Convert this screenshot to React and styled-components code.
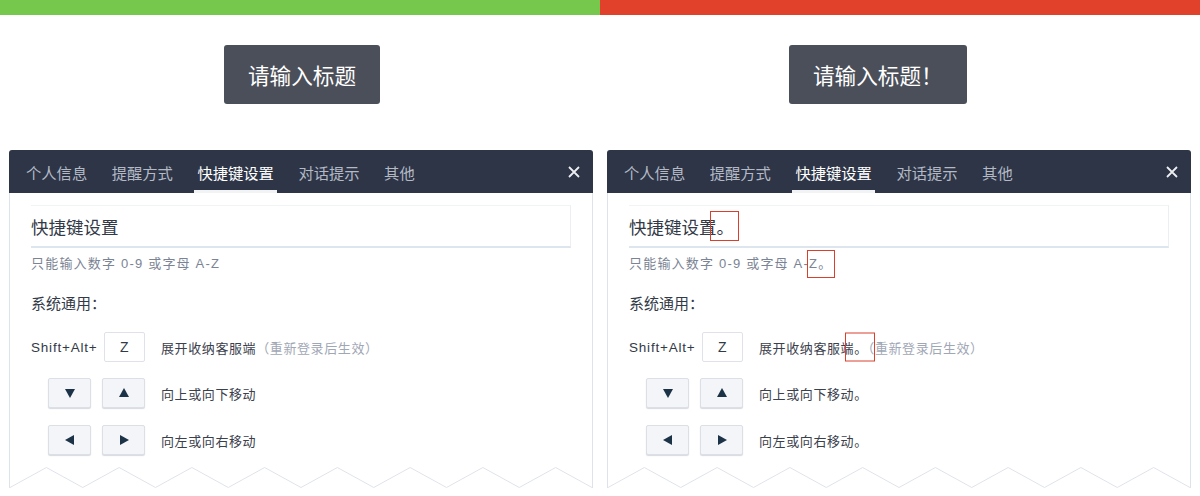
import React from 'react';
import styled, { createGlobalStyle } from 'styled-components';

const GlobalStyle = createGlobalStyle`
  body {
    margin: 0;
    background: #fff;
    font-family: "Liberation Sans", "Noto Sans CJK SC", sans-serif;
  }
`;

const Page = styled.div`
  display: grid;
  grid-template-columns: 600px 600px;
  width: 1200px;
  height: 496px;
  overflow: hidden;
`;

const Half = styled.section`
  display: flex;
  flex-direction: column;
`;

const TopBar = styled.div`
  height: 15px;
  background: ${p => p.$color};
`;

const TitleButton = styled.button`
  align-self: flex-start;
  margin: 30px 0 0 ${p => p.$offset}px;
  height: 59px;
  padding: 0 24px;
  border: none;
  border-radius: 3px;
  background: #4b4f5a;
  color: #fff;
  font-family: "Noto Sans CJK SC", sans-serif;
  font-size: 21.6px;
  display: flex;
  align-items: center;
`;

const Panel = styled.div`
  margin: 46px 0 0 ${p => p.$offset}px;
  width: 584px;
`;

const Header = styled.div`
  height: 43px;
  box-sizing: border-box;
  display: flex;
  align-items: stretch;
  padding: 0 13px 0 14px;
  background: #2d3547;
  border-radius: 3px 3px 0 0;
`;

const TabList = styled.div`
  display: flex;
  gap: 18.5px;
`;

const Tab = styled.div`
  display: flex;
  align-items: center;
  padding: 0 3px;
  border-top: 3px solid transparent;
  border-bottom: 3px solid ${p => (p.$active ? '#f2f3f5' : 'transparent')};
  font-family: "Noto Sans CJK SC", sans-serif;
  font-size: 15.3px;
  color: ${p => (p.$active ? '#ffffff' : '#b3b9c5')};
`;

const Close = styled.div`
  margin-left: auto;
  align-self: center;
  display: flex;
`;

const Body = styled.div`
  border: 1px solid #dde3eb;
  border-top: none;
  border-bottom: none;
  padding-top: 12px;
`;

const Content = styled.div`
  padding: 0 21px;
`;

const TitleBox = styled.div`
  height: 40px;
  display: flex;
  align-items: center;
  border-top: 1px solid #f2f3f5;
  border-right: 1px solid #eceef2;
  border-bottom: 2px solid #dde5ef;
  font-family: "Noto Sans CJK SC", sans-serif;
  font-size: 17.5px;
  color: #323a48;
`;

const Hint = styled.div`
  margin-top: 6px;
  line-height: 20px;
  font-size: 13px;
  letter-spacing: 1.2px;
  color: #7b8494;
`;

const Section = styled.div`
  margin-top: 18px;
  line-height: 22px;
  font-family: "Noto Sans CJK SC", sans-serif;
  font-size: 15px;
  color: #333a47;
`;

const Row = styled.div`
  display: flex;
  align-items: center;
  height: 30px;
  margin-top: ${p => p.$gap}px;
`;

const Cluster = styled.div`
  width: 114px;
  display: flex;
  justify-content: flex-end;
  align-items: center;
  gap: ${p => p.$gap}px;
`;

const KeyLabel = styled.span`
  font-size: 13.5px;
  letter-spacing: 0.8px;
  color: #333a47;
`;

const KeyInput = styled.div`
  width: 42px;
  height: 30px;
  box-sizing: border-box;
  display: flex;
  align-items: center;
  justify-content: center;
  border: 1px solid #dfe2e8;
  border-radius: 2px;
  background: #fff;
  font-size: 14px;
  color: #333a47;
`;

const ArrowKey = styled.div`
  width: 43px;
  height: 30px;
  box-sizing: border-box;
  display: flex;
  align-items: center;
  justify-content: center;
  border: 1px solid #dcdfe5;
  border-radius: 2px;
  background: #f3f5f8;
  box-shadow: 0 1px 1px rgba(30, 50, 80, 0.18);
`;

const Desc = styled.div`
  margin-left: 16px;
  font-family: "Noto Sans CJK SC", sans-serif;
  font-size: 13px;
  letter-spacing: 0.6px;
  color: #3a404c;
`;

const Note = styled.span`
  color: #9fa7b5;
`;

const Mark = styled.span`
  position: relative;
  &::after {
    content: '';
    position: absolute;
    left: ${p => p.$dx}px;
    top: 50%;
    transform: translateY(-50%);
    width: ${p => p.$w}px;
    height: ${p => p.$h}px;
    box-sizing: border-box;
    border: 1.5px solid #d8402c;
  }
`;

const Zigzag = styled.svg`
  display: block;
  margin-top: 12px;
  width: 100%;
  height: 21px;
`;

const tabs = ['个人信息', '提醒方式', '快捷键设置', '对话提示', '其他'];

const arrows = {
  down: '1,2 11,2 6,11',
  up: '1,10 11,10 6,1',
  left: '10,1 10,11 1,6',
  right: '2,1 2,11 11,6',
};

const Arrow = ({ dir }) => (
  <ArrowKey>
    <svg width="12" height="12" viewBox="0 0 12 12">
      <polygon points={arrows[dir]} fill="#1c3246" />
    </svg>
  </ArrowKey>
);

const zigPoints = (() => {
  const w = 582;
  const n = 8;
  const step = w / n;
  const pts = [];
  for (let i = 0; i <= n; i++) {
    pts.push(`${i * step},20.5`);
    if (i < n) pts.push(`${i * step + step / 2},0.5`);
  }
  return pts.join(' ');
})();

const Dot = ({ marked, dx, w, h, children }) =>
  marked ? (
    <Mark $dx={dx} $w={w} $h={h}>
      {children}
    </Mark>
  ) : null;

const HalfView = ({ color, label, buttonOffset, panelOffset, marked }) => (
  <Half>
    <TopBar $color={color} />
    <TitleButton $offset={buttonOffset}>{label}</TitleButton>
    <Panel $offset={panelOffset}>
      <Header>
        <TabList>
          {tabs.map((t, i) => (
            <Tab key={t} $active={i === 2}>
              {t}
            </Tab>
          ))}
        </TabList>
        <Close>
          <svg width="12" height="12" viewBox="0 0 12 12">
            <path d="M1 1L11 11M11 1L1 11" stroke="#eceef1" strokeWidth="1.8" />
          </svg>
        </Close>
      </Header>
      <Body>
        <Content>
          <TitleBox>
            快捷键设置
            <Dot marked={marked} dx={-7} w={29} h={30}>。</Dot>
          </TitleBox>
          <Hint>
            只能输入数字 0-9 或字母 A-
            <Dot marked={marked} dx={-2} w={28} h={28}>Z。</Dot>
            {!marked && 'Z'}
          </Hint>
          <Section>系统通用：</Section>
          <Row $gap={18}>
            <Cluster $gap={6}>
              <KeyLabel>Shift+Alt+</KeyLabel>
              <KeyInput>Z</KeyInput>
            </Cluster>
            <Desc>
              展开收纳客服端
              <Dot marked={marked} dx={-9} w={30} h={29}>。</Dot>
              <Note>（重新登录后生效）</Note>
            </Desc>
          </Row>
          <Row $gap={16}>
            <Cluster $gap={11}>
              <Arrow dir="down" />
              <Arrow dir="up" />
            </Cluster>
            <Desc>向上或向下移动{marked && '。'}</Desc>
          </Row>
          <Row $gap={17}>
            <Cluster $gap={11}>
              <Arrow dir="left" />
              <Arrow dir="right" />
            </Cluster>
            <Desc>向左或向右移动{marked && '。'}</Desc>
          </Row>
        </Content>
        <Zigzag viewBox="0 0 582 21" preserveAspectRatio="none">
          <polyline points={zigPoints} fill="none" stroke="#dfe3ea" strokeWidth="1" />
        </Zigzag>
      </Body>
    </Panel>
  </Half>
);

export default function App() {
  return (
    <>
      <GlobalStyle />
      <Page>
        <HalfView color="#76c84d" label="请输入标题" buttonOffset={224} panelOffset={9} />
        <HalfView color="#e1412b" label="请输入标题！" buttonOffset={189} panelOffset={7} marked />
      </Page>
    </>
  );
}
